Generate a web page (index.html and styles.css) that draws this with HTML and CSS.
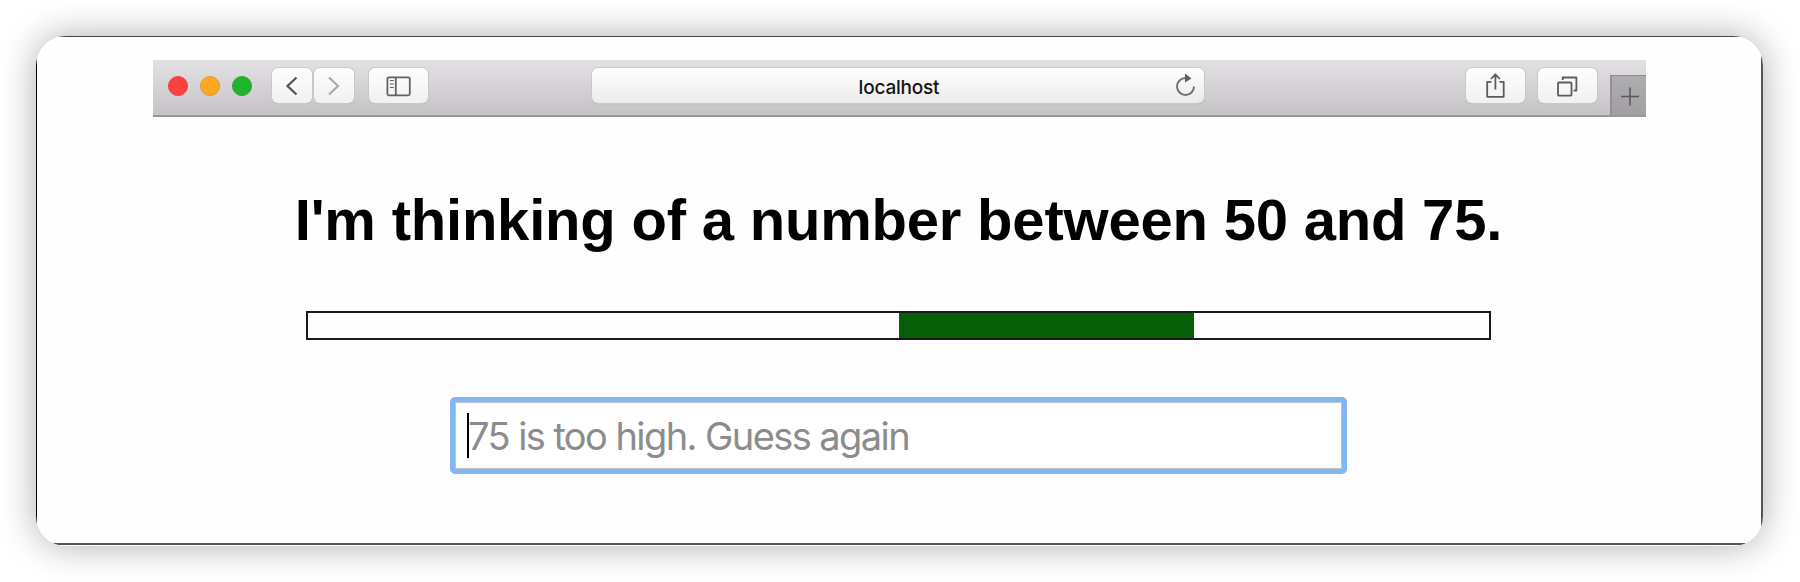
FILE: index.html
```html
<!DOCTYPE html>
<html lang="en">
<head>
<meta charset="utf-8">
<title>localhost</title>
<link rel="stylesheet" href="styles.css">
</head>
<body>
<div class="card">
  <div class="frame">
    <header class="toolbar">
      <div class="lights"><span class="light red"></span><span class="light amber"></span><span class="light green"></span></div>
      <div class="nav">
        <button class="btn" aria-label="Back"><svg width="40" height="36" viewBox="0 0 40 36"><path d="M24.5 9.5 15.5 18l9 8.500" fill="none" stroke="#555" stroke-width="2.300"/></svg></button>
        <button class="btn" aria-label="Forward"><svg width="40" height="36" viewBox="0 0 40 36"><path d="M15 9.500 24 18l-9 8.500" fill="none" stroke="#aaa" stroke-width="2.200"/></svg></button>
      </div>
      <button class="btn wide" aria-label="Sidebar"><svg width="59" height="36" viewBox="0 0 59 36" fill="none" stroke="#616361"><rect x="18.400" y="9.300" width="22.400" height="18" rx="1.500" stroke-width="1.800"/><path d="M26.800 9v18.500" stroke-width="1.800"/><path d="M20.800 12.500h4M20.800 16h4M20.800 19.500h4" stroke-width="1.200"/></svg></button>
      <div class="address"><span class="host">localhost</span><svg class="reload" width="24" height="28" viewBox="0 0 24 28"><path d="M20 14.500A8.500 8.500 0 1 1 11.500 6" fill="none" stroke="#707070" stroke-width="1.900"/><path d="M11 1.500 17.500 6.500 11 10.500z" fill="#606060"/></svg></div>
      <button class="btn wide share" aria-label="Share"><svg width="59" height="36" viewBox="0 0 59 36" fill="none" stroke="#5c5c5c" stroke-width="1.800"><path d="M25.500 13.800h-4.300v15h16.500v-15h-4.300M29.400 21.500V7M25 11l4.400-4.700 4.400 4.700" stroke-linejoin="round"/></svg></button>
      <button class="btn wide tabs" aria-label="Tabs"><svg width="59" height="36" viewBox="0 0 59 36" fill="none" stroke="#5c5c5c" stroke-width="1.800" stroke-linejoin="round"><rect x="20" y="14.500" width="13.500" height="13.200" rx="1"/><path d="M24.700 12V9.500h13.700v13h-2.700"/></svg></button>
      <button class="newtab" aria-label="New tab"><svg width="35" height="40" viewBox="0 0 35 40"><path d="M9 20.500h18M18 11.500v18" stroke="#5a585b" stroke-width="1.600"/></svg></button>
    </header>
    <main class="game">
      <h1 class="title">I'm thinking of a number between 50 and 75.</h1>
      <div class="range"><div class="fill"></div></div>
      <div class="guess"><input class="field" type="text" placeholder="75 is too high. Guess again"><span class="caret"></span></div>
    </main>
  </div>
</div>
</body>
</html>
```
FILE: styles.css
```css
* { box-sizing: border-box; }
body { margin: 0; padding: 36px; height: 582px; background: #fff; overflow: hidden; }
.card {
  width: 1727px; height: 510px; border-radius: 30px; overflow: hidden; background: #fff;
  box-shadow: 0 0 36px rgba(0, 0, 0, .32);
}
.frame {
  width: 1727px; height: 509px; padding: 23px 116px 0; background: #fefefe;
  border: 1px solid #444; border-left-color: #000;
  border-right: 2px solid #555; border-bottom: 2px solid #555;
}
.toolbar {
  display: flex; align-items: flex-start; width: 1493px; height: 57px; padding: 8px 0 0 14px;
  background: linear-gradient(#e3e1e4, #c6c3c7); border-bottom: 2px solid #9a979c;
}
.lights { display: flex; gap: 12px; margin: 8px 0 0 .5px; }
.light { width: 20px; height: 20px; border-radius: 50%; }
.red { background: #fc403d; border: 1px solid #e5413f; }
.amber { background: #fea624; border: 1px solid #e0982b; }
.green { background: #1db52b; border: 1px solid #2ba135; }
.nav { display: flex; gap: 2px; margin-left: 20.5px; }
.btn {
  width: 40px; height: 35px; padding: 0; border: 0; border-radius: 6px;
  background: linear-gradient(#fdfdfd, #f1f1f1);
  box-shadow: 0 0 0 1px #c9c7ca, 0 1px 1px #a19fa2;
}
.btn svg, .newtab svg { display: block; }
.wide { width: 59px; margin-left: 15px; }
.address {
  display: flex; justify-content: center; align-items: center; position: relative;
  width: 613px; height: 35px; margin-left: 164px; border-radius: 6px;
  background: linear-gradient(#fefefe, #ebebeb);
  box-shadow: 0 0 0 1px #c9c7ca, 0 1px 1px #908e91;
}
.host { margin: 3px 0 0 2px; font: 500 19px/35px Inter, sans-serif; letter-spacing: -.2px; color: #151515; }
.reload { position: absolute; right: 6px; top: 4px; }
.share { margin-left: 262px; }
.tabs { margin-left: 13px; }
.newtab {
  width: 36px; height: 40px; margin: 7px 0 0 13px; padding: 0;
  background: linear-gradient(#b0adb1, #a29fa3); border: 0; border-top: 1px solid #8f8c90; border-left: 2px solid #929093;
}
.game { display: flex; flex-direction: column; align-items: center; width: 1491px; }
.title {
  margin: 68px 0 0; height: 70px; white-space: nowrap;
  font: bold 58px/70px "Liberation Sans", Arial, sans-serif; letter-spacing: -.2px; color: #000;
}
.range { width: 1185px; height: 29px; margin-top: 56px; border: 2px solid #1a1a1a; }
.fill { width: 25%; height: 100%; margin-left: 50%; background: #055f07; }
.guess { position: relative; width: 897px; height: 77px; margin-top: 57px; }
.field {
  display: block; width: 100%; height: 100%; padding: 0 13px; outline: 0;
  border: 5px solid #84b6f3; border-radius: 5px; background: #fff;
  box-shadow: inset 0 0 0 1px #b9c3d2;
  font: 400 38px/1.2 Inter, sans-serif; letter-spacing: -1.58px; color: #000;
}
.field::placeholder { color: #8c8c8c; opacity: 1; }
.caret { position: absolute; left: 17px; top: 16px; width: 2px; height: 45px; background: #000; }
```
